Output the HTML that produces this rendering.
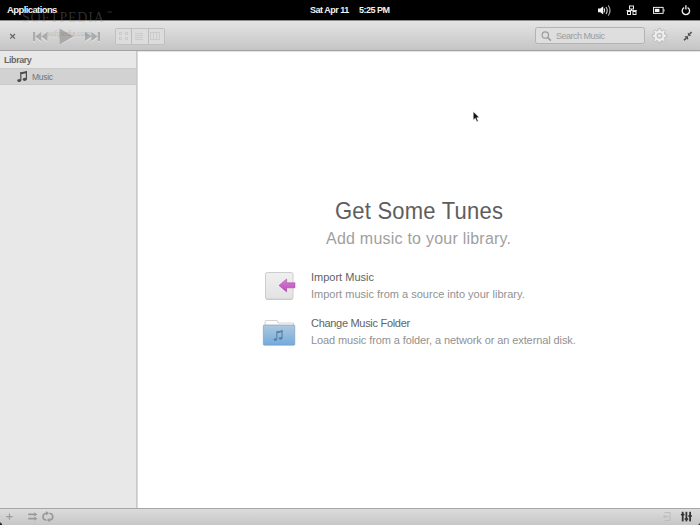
<!DOCTYPE html>
<html><head><meta charset="utf-8">
<style>
*{margin:0;padding:0;box-sizing:border-box}
html,body{width:700px;height:525px;overflow:hidden;background:#fff;font-family:"Liberation Sans",sans-serif}
.abs{position:absolute}
svg{position:absolute;overflow:visible}
#panel{left:0;top:0;width:700px;height:20px;background:#000;color:#f2f2f2;font-weight:bold;font-size:9px}
#panel .t{position:absolute;top:4.5px;white-space:nowrap;letter-spacing:-0.5px}
#toolbar{left:0;top:20px;width:700px;height:30px;background:linear-gradient(#8c8c8c 0,#8c8c8c 1px,#e4e4e4 1px,#e2e2e2 3px,#c5c5c5)}
#tbline{left:0;top:50px;width:700px;height:1px;background:#a2a2a2}
#sidebar{left:0;top:51px;width:136px;height:457px;background:#e8e8e8}
#sbline{left:136px;top:51px;width:2px;height:457px;background:linear-gradient(90deg,#c9c9c9 50%,#d8d8d8 50%)}
#content{left:138px;top:51px;width:562px;height:457px;background:linear-gradient(#e4e4e4 0,#e4e4e4 1px,#fff 1px)}
#bline{left:0;top:508px;width:700px;height:1px;background:#a6a6a6}
#bottom{left:0;top:509px;width:700px;height:16px;background:linear-gradient(#dcdcdc,#c6c6c6)}
.txt{position:absolute;white-space:nowrap}
</style></head><body>
<div id="panel" class="abs">
  <div class="t" style="left:7px;font-size:9.5px;top:3.5px;letter-spacing:-0.6px">Applications</div>
  <div class="t" style="left:310px">Sat Apr 11</div>
  <div class="t" style="left:359px">5:25 PM</div>
</div>

<svg style="left:0;top:0" width="700" height="20">
  <!-- volume -->
  <path d="M598 8.6 H600.3 L603.2 6.2 V14.6 L600.3 12.2 H598 Z" fill="#f4f4f4"/>
  <path d="M604 8.3 Q605.4 10.4 604 12.5" stroke="#e8e8e8" stroke-width="1.2" fill="none"/>
  <path d="M606 7 Q608.4 10.4 606 13.9" stroke="#cfcfcf" stroke-width="1.1" fill="none"/>
  <path d="M608.2 5.2 Q611.8 10.4 608.2 15.6" stroke="#a8a8a8" stroke-width="1.1" fill="none"/>
  <!-- network -->
  <g stroke="#eeeeee" stroke-width="1" fill="none">
    <rect x="629.5" y="6" width="4" height="3"/>
    <path d="M631.5 9 V10.6 M626.5 10.6 H636.8"/>
    <rect x="627.5" y="11.5" width="3" height="3"/>
    <rect x="633" y="11.5" width="3" height="3"/>
  </g>
  <!-- battery -->
  <rect x="653.5" y="7.4" width="9.6" height="6" fill="none" stroke="#e8e8e8" stroke-width="1"/>
  <rect x="654.8" y="8.8" width="4.6" height="3.2" fill="#fafafa"/>
  <rect x="663.3" y="9.2" width="1.2" height="2.4" fill="#cfcfcf"/>
  <!-- power -->
  <path d="M684.2 7.6 A3.7 3.7 0 1 0 687.6 7.6" stroke="#f0f0f0" stroke-width="1.3" fill="none"/>
  <path d="M685.9 5.2 V9.6" stroke="#f0f0f0" stroke-width="1.3"/>
</svg>
<div id="toolbar" class="abs"></div>
<div class="txt" style="left:22px;top:9.5px;font-family:'Liberation Serif',serif;font-size:14px;letter-spacing:0.8px;color:rgba(150,150,150,0.33)">SOFTPEDIA</div>
<div class="txt" style="left:106px;top:10px;font-size:6px;color:rgba(150,150,150,0.35)">&#8482;</div>
<div id="tbline" class="abs"></div>
<!-- toolbar icons -->
<svg style="left:0;top:0" width="700" height="525">
  <!-- close x -->
  <path d="M10.2 34 L15 38.6 M15 34 L10.2 38.6" stroke="#626262" stroke-width="1.2" fill="none"/>
  <!-- prev -->
  <g fill="#fafafa" opacity="0.6" transform="translate(0,1)">
    <rect x="33" y="32" width="2.2" height="9.2"/>
    <path d="M35.2 36.6 L41.3 32 L41.3 41.2 Z M41.3 36.6 L47.5 32 L47.5 41.2 Z"/>
  </g>
  <g fill="#ababab">
    <rect x="33" y="32" width="2.2" height="9.2"/>
    <path d="M35.2 36.6 L41.3 32 L41.3 41.2 Z M41.3 36.6 L47.5 32 L47.5 41.2 Z"/>
  </g>
  <!-- play -->
  <path d="M59.5 29.5 L73.7 36.6 L59.5 43.7 Z" fill="#fafafa" opacity="0.6" transform="translate(0,1)"/>
  <path d="M59.5 28.6 L73.7 36.6 L59.5 44.6 Z" fill="#a9a9a9"/>
  <!-- next -->
  <g fill="#fafafa" opacity="0.6" transform="translate(0,1)">
    <rect x="97.8" y="32" width="2.2" height="9.2"/>
    <path d="M85 32 L91.3 36.6 L85 41.2 Z M91.3 32 L97.8 36.6 L91.3 41.2 Z"/>
  </g>
  <g fill="#ababab">
    <rect x="97.8" y="32" width="2.2" height="9.2"/>
    <path d="M85 32 L91.3 36.6 L85 41.2 Z M91.3 32 L97.8 36.6 L91.3 41.2 Z"/>
  </g>
  <!-- view switcher -->
  <rect x="115.5" y="28.5" width="49" height="16" rx="1.5" fill="#dcdcdc" stroke="#c0c0c0" stroke-width="1"/>
  <line x1="131.5" y1="28.5" x2="131.5" y2="44.5" stroke="#bcbcbc"/>
  <line x1="148.5" y1="28.5" x2="148.5" y2="44.5" stroke="#bcbcbc"/>
  <g fill="none" stroke="#cbcbcb" stroke-width="1">
    <rect x="119.5" y="32.5" width="2" height="2"/><rect x="125.5" y="32.5" width="2" height="2"/>
    <rect x="119.5" y="37.5" width="2" height="2"/><rect x="125.5" y="37.5" width="2" height="2"/>
    <path d="M135 33.5 H143 M135 35.5 H143 M135 37.5 H143 M135 39.5 H143"/>
    <rect x="150.5" y="32.5" width="9" height="7"/><path d="M153.5 33 V39 M156.5 33 V39"/>
  </g>
  <!-- search -->
  <rect x="535.5" y="27.5" width="109" height="16" rx="2" fill="#dedede" stroke="#b3b3b3" stroke-width="1"/>
  <circle cx="545.3" cy="35" r="3.2" fill="none" stroke="#9a9a9a" stroke-width="1.2"/>
  <path d="M547.6 37.4 L550.8 40.6" stroke="#9a9a9a" stroke-width="1.5"/>
  <!-- gear -->
  <g transform="translate(659.5,35.8)">
    <path d="M-1.14,-7.21 L1.14,-7.21 L1.39,-5.42 L2.85,-4.82 L4.29,-5.91 L5.91,-4.29 L4.82,-2.85 L5.42,-1.39 L7.21,-1.14 L7.21,1.14 L5.42,1.39 L4.82,2.85 L5.91,4.29 L4.29,5.91 L2.85,4.82 L1.39,5.42 L1.14,7.21 L-1.14,7.21 L-1.39,5.42 L-2.85,4.82 L-4.29,5.91 L-5.91,4.29 L-4.82,2.85 L-5.42,1.39 L-7.21,1.14 L-7.21,-1.14 L-5.42,-1.39 L-4.82,-2.85 L-5.91,-4.29 L-4.29,-5.91 L-2.85,-4.82 L-1.39,-5.42 Z" fill="#efefef" stroke="#bababa" stroke-width="1" stroke-linejoin="round"/>
    <circle r="2.4" fill="#e4e4e4" stroke="#c0c0c0" stroke-width="1.2"/>
  </g>
  <!-- collapse arrows -->
  <path d="M687.9 35.7 L687.9 32.4 L691.2 35.7 Z M688.1 36.2 L688.1 39.9 L684.4 36.2 Z" fill="#4a4a4a"/>
  <path d="M689.6 34 L691.6 32 M686.2 38.1 L684 40.3" stroke="#4a4a4a" stroke-width="1.5"/>
</svg>

<div class="txt" style="left:556px;top:31px;font-size:9px;color:#9c9c9c;letter-spacing:-0.5px">Search Music</div>
<div class="txt" style="left:47px;top:29px;font-family:'Liberation Serif',serif;font-size:8px;letter-spacing:-0.1px;color:rgba(110,110,110,0.3)">softpedia.com</div>
<div id="sidebar" class="abs">
  <div class="txt" style="left:4px;top:4px;font-size:9px;font-weight:bold;color:#6a6a6a;letter-spacing:-0.45px">Library</div>
  <div class="abs" style="left:0;top:17px;width:136px;height:17px;background:#d2d2d2;border-top:1px solid #cbcbcb;border-bottom:1px solid #c8c8c8"></div>
  <div class="txt" style="left:32px;top:21.3px;font-size:8.5px;color:#757575;letter-spacing:-0.3px">Music</div>
</div>
<div id="sbline" class="abs"></div>
<div id="content" class="abs">
  <div class="txt" style="left:197px;top:146px;font-size:22px;color:#5e5e5e;letter-spacing:0.22px;transform:scaleY(1.09);transform-origin:0 0">Get Some Tunes</div>
  <div class="txt" style="left:188px;top:178px;font-size:16px;color:#a0a0a0;letter-spacing:0.23px;transform:scaleY(1.07);transform-origin:0 0">Add music to your library.</div>
  <div class="txt" style="left:173px;top:220px;font-size:11px;color:#626262">Import Music</div>
  <div class="txt" style="left:173px;top:237px;font-size:11px;color:#919191">Import music from a source into your library.</div>
  <div class="txt" style="left:173px;top:266px;font-size:11px;color:#626262;letter-spacing:-0.3px">Change Music Folder</div>
  <div class="txt" style="left:173px;top:283px;font-size:11px;color:#919191;letter-spacing:-0.1px">Load music from a folder, a network or an external disk.</div>
</div>
<div id="bline" class="abs"></div>
<div id="bottom" class="abs"></div>

<svg style="left:0;top:0" width="700" height="525">
  <!-- sidebar note -->
  <g fill="#4a4a4a">
    <path d="M20.2 72.4 L27 70.9 L27 73 L21.4 74.2 Z"/>
    <rect x="20.2" y="72" width="1.2" height="8.4"/>
    <rect x="25.8" y="71" width="1.2" height="8.3"/>
    <ellipse cx="19.2" cy="80.5" rx="1.9" ry="1.6"/>
    <ellipse cx="24.7" cy="79.3" rx="1.9" ry="1.6"/>
  </g>
  <!-- import icon -->
  <defs>
    <linearGradient id="gbox" x1="0" y1="0" x2="0" y2="1"><stop offset="0" stop-color="#f0f0f0"/><stop offset="1" stop-color="#e2e2e2"/></linearGradient>
    <linearGradient id="garr" x1="0" y1="0" x2="0" y2="1"><stop offset="0" stop-color="#dc80dc"/><stop offset="1" stop-color="#b64cb6"/></linearGradient>
    <linearGradient id="gfold" x1="0" y1="0" x2="0" y2="1"><stop offset="0" stop-color="#b0c8de"/><stop offset="1" stop-color="#72abdd"/></linearGradient>
  </defs>
  <rect x="265.5" y="273" width="27.5" height="27" rx="1.8" fill="#c9c9c9"/>
  <rect x="265.5" y="272.5" width="27.5" height="26.5" rx="1.8" fill="url(#gbox)" stroke="#cdcdcd" stroke-width="1"/>
  <path d="M279 285.4 L286.6 279 L286.6 282.8 L295 282.8 L295 287.8 L286.6 287.8 L286.6 291.9 Z" fill="url(#garr)" stroke="#a33aa3" stroke-width="0.5"/>
  <!-- folder icon -->
  <path d="M265 321.5 L265 326 L293.5 326 L293.5 323 L278 323 L277.3 320.5 L265.5 320.5 Z" fill="#fdfdfd" stroke="#c8c8c8" stroke-width="0.8"/>
  <rect x="263.3" y="325" width="31.5" height="20.2" rx="1" fill="url(#gfold)" stroke="#7b9bb8" stroke-width="0.6"/>
  <g fill="#5581a9">
    <path d="M276.3 331.6 L282.6 330.2 L282.6 332 L277.4 333.2 Z"/>
    <rect x="276.3" y="331.4" width="1.1" height="8"/>
    <rect x="281.5" y="330.3" width="1.1" height="8"/>
    <ellipse cx="275.4" cy="339.6" rx="1.7" ry="1.3"/>
    <ellipse cx="280.6" cy="338.4" rx="1.7" ry="1.3"/>
  </g>
  <!-- bottom left icons -->
  <path d="M9.4 513.5 V519.7 M6.3 516.6 H12.6" stroke="#9a9a9a" stroke-width="1.1"/>
  <path d="M28.2 514.4 H35 M28.2 518.7 H35" stroke="#999" stroke-width="1.7" fill="none"/>
  <path d="M34.4 512.3 L37.3 514.4 L34.4 516.5 Z M34.4 516.6 L37.3 518.7 L34.4 520.8 Z" fill="#999"/>
  <g stroke="#999" stroke-width="1.6" fill="none">
    <path d="M46.3 513.3 A4 3.5 0 0 0 46.3 520.2"/>
    <path d="M49.4 520.1 A4 3.5 0 0 0 49.4 513.2"/>
  </g>
  <path d="M46 511.1 L49 513.3 L46 515.5 Z M49.7 517.9 L46.7 520.1 L49.7 522.3 Z" fill="#999"/>
  <!-- bottom right icons -->
  <path d="M664.5 512.5 H670 V520.5 H664.5" stroke="#bdbdbd" stroke-width="1.1" fill="none"/>
  <path d="M663.5 516.6 H668.5" stroke="#bdbdbd" stroke-width="1.2"/>
  <path d="M662.8 516.6 L665.3 514.6 L665.3 518.6 Z" fill="#bdbdbd"/>
  <g fill="#333">
    <rect x="681.8" y="511.8" width="1.8" height="9.6"/>
    <rect x="685.5" y="511.8" width="1.8" height="9.6"/>
    <rect x="689.2" y="511.8" width="1.8" height="9.6"/>
    <rect x="680.9" y="513.8" width="3.6" height="1.6"/>
    <rect x="684.6" y="518.2" width="3.6" height="1.6"/>
    <rect x="688.3" y="515.2" width="3.6" height="1.6"/>
  </g>
  <!-- cursor -->
  <path d="M473.2 111.4 L473.2 120.2 L475.3 118.3 L476.8 121.8 L478.3 121.2 L476.8 117.8 L479.3 117.6 Z" fill="#111" stroke="#fff" stroke-width="0.6"/>
  <rect x="0" y="524" width="2" height="1" fill="#222"/><rect x="0" y="523" width="1" height="1" fill="#333"/><rect x="1" y="523" width="1" height="1" fill="#777"/><rect x="0" y="522" width="1" height="1" fill="#888"/>
  <rect x="699" y="524" width="1" height="1" fill="#333"/><rect x="698" y="524" width="1" height="1" fill="#888"/><rect x="699" y="523" width="1" height="1" fill="#888"/>
</svg>
</body></html>
